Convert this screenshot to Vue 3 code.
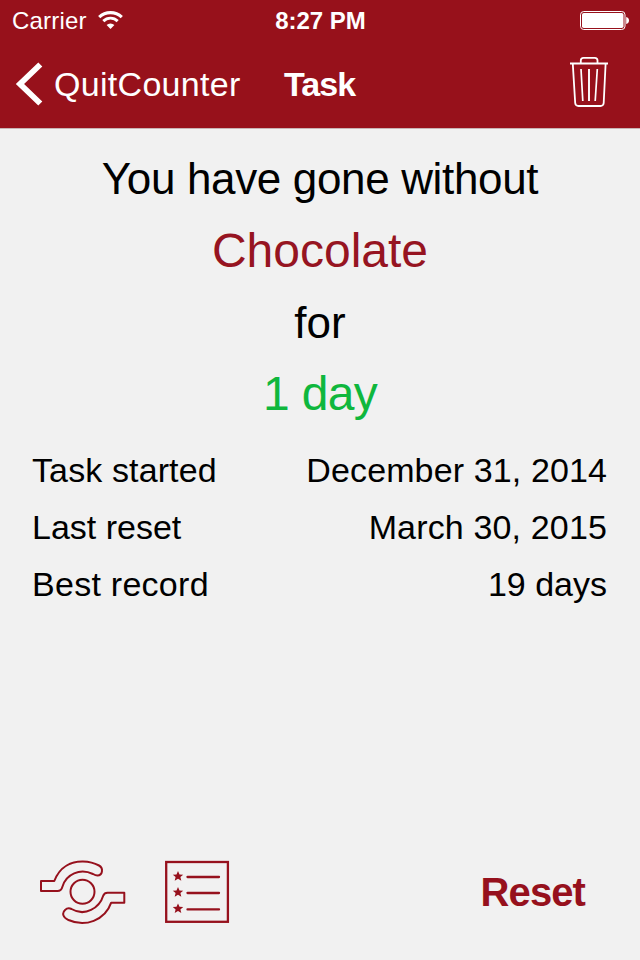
<script setup>
const lines = [
  { text: 'You have gone without', kind: 'plain lead' },
  { text: 'Chocolate', kind: 'subject' },
  { text: 'for', kind: 'plain' },
  { text: '1 day', kind: 'count' },
]

const stats = [
  { label: 'Task started', value: 'December 31, 2014', kind: 'started' },
  { label: 'Last reset', value: 'March 30, 2015', kind: 'last' },
  { label: 'Best record', value: '19 days', kind: 'best' },
]

const listRows = [876, 892, 908.4]
</script>

<template>
  <div class="screen">
    <header class="top">
      <div class="status">
        <div class="carrier">
          <span class="carrier-name">Carrier</span>
          <svg class="wifi" width="26" height="20" viewBox="97 10 26 20">
            <path d="M99.2 17.2A16.2 16.2 0 0 1 121.800 17.2" fill="none" stroke="#fff" stroke-width="3.1" />
            <path d="M103.300 21.1A10.300 10.300 0 0 1 117.700 21.1" fill="none" stroke="#fff" stroke-width="2.900" />
            <path d="M106.600 25A5.700 5.700 0 0 1 114.400 25L110.500 28.900Z" fill="#fff" />
          </svg>
        </div>
        <span class="clock">8:27 PM</span>
        <svg class="battery" width="50" height="20" viewBox="579 10 50 20">
          <rect x="580.500" y="11.500" width="44.500" height="18" rx="3.300" fill="none" stroke="#fff" stroke-width="1" />
          <rect x="582" y="13" width="41.500" height="15" rx="1.800" fill="#fff" />
          <path d="M626.200 17Q629 17.600 629 20.500T626.200 24Z" fill="#fff" />
        </svg>
      </div>
      <nav class="nav">
        <button class="back">
          <svg width="28" height="44" viewBox="15 62 28 44">
            <path d="M40.300 64.500L20 84L40.300 103.500" fill="none" stroke="#fff" stroke-width="5.800" />
          </svg>
          <span class="back-label">QuitCounter</span>
        </button>
        <h1 class="title">Task</h1>
        <button class="trash" aria-label="Delete">
          <svg width="40" height="56" viewBox="569 56 40 56" fill="none" stroke="#fff">
            <path d="M570 63.500H608" stroke-width="1.900" />
            <path d="M580.800 63V60.500Q580.800 57.800 583.500 57.800H594.800Q597.500 57.800 597.500 60.500V63" stroke-width="1.800" />
            <path d="M572.800 64L575.200 103Q575.500 106 578.500 106H600.500Q603.400 106 603.700 103L605.600 64" stroke-width="1.800" />
            <path d="M581 69L582.800 101M597.300 69L595.200 101" stroke-width="1.700" />
            <path d="M589 69V101" stroke-width="1.900" />
          </svg>
        </button>
      </nav>
    </header>

    <main class="content">
      <section class="summary">
        <p v-for="line in lines" :key="line.text" :class="line.kind"><span>{{ line.text }}</span></p>
      </section>
      <dl class="stats">
        <div v-for="row in stats" :key="row.label" class="stat" :class="row.kind">
          <dt>{{ row.label }}</dt>
          <dd>{{ row.value }}</dd>
        </div>
      </dl>
    </main>

    <footer class="toolbar">
      <button class="share" aria-label="Share">
        <svg width="88" height="66" viewBox="39 859 88 66" fill="none" stroke="#96111d" stroke-width="2" stroke-linejoin="round">
          <path d="M41 881H54.300C60 866 72 861.300 83 861.500Q92 861.700 99 865.500C103.800 868.200 102.500 875.500 97.500 875.500Q95.500 875.500 93 874C80 868 66 874 62.300 887Q61.300 891 57.500 891H41Z" />
          <path d="M124.300 892.700H107.500Q104.500 892.700 103.300 895.500C99.500 908 85 917 71.500 909C66.500 906.700 62 911.500 63.500 915.500C64.200 918 66.500 919 68.500 920C85 927.500 105 920.500 111.200 902.700H124.300Z" />
          <circle cx="82.500" cy="891.800" r="12" />
        </svg>
      </button>
      <button class="list" aria-label="Records">
        <svg width="66" height="64" viewBox="164 860 66 64">
          <rect x="166.200" y="862" width="61.700" height="59.800" fill="none" stroke="#96111d" stroke-width="2.300" />
          <g v-for="y in listRows" :key="y" :transform="`translate(178 ${y})`">
            <path d="M0-5L1.500-1.600L5.200-1.300L2.400 1L3.300 4.700L0 2.700L-3.300 4.700L-2.400 1L-5.200-1.300L-1.500-1.600Z" fill="#96111d" />
            <path d="M9.500 1H41" stroke="#96111d" stroke-width="2.300" stroke-linecap="round" />
          </g>
        </svg>
      </button>
      <button class="reset">Reset</button>
    </footer>
  </div>
</template>

<style>
body {
  margin: 0;
  background: #f1f1f1;
}
</style>

<style scoped>
.screen {
  display: flex;
  flex-direction: column;
  box-sizing: border-box;
  width: 640px;
  height: 960px;
  overflow: hidden;
  background: #f1f1f1;
  color: #000;
  font-family: "Liberation Sans", Arial, sans-serif;
  white-space: nowrap;
}
button {
  display: flex;
  padding: 0;
  border: 0;
  background: none;
  color: inherit;
  font: inherit;
}
svg {
  display: block;
  flex: none;
}
p, h1, dl, dt, dd {
  margin: 0;
}
.top {
  height: 128px;
  background: #97111b;
  border-bottom: 1px solid #c9b4b5;
  color: #fff;
}
.status {
  display: grid;
  grid-template-columns: 1fr auto 1fr;
  align-items: center;
  height: 40px;
  padding: 0 11px 0 12px;
}
.carrier {
  display: flex;
  align-items: center;
  gap: 10px;
}
.carrier-name {
  height: 40px;
  font-size: 24px;
  line-height: 42px;
  letter-spacing: 0.200px;
}
.clock {
  height: 40px;
  font-size: 24px;
  font-weight: bold;
  line-height: 42px;
}
.battery {
  justify-self: end;
}
.nav {
  display: grid;
  grid-template-columns: 269px auto 1fr;
  align-items: center;
  height: 88px;
  padding: 0 31px 0 15px;
}
.back {
  align-items: center;
  gap: 11px;
}
.back-label {
  font-size: 34px;
  line-height: 88px;
  letter-spacing: 0.300px;
}
.title {
  font-size: 34px;
  font-weight: bold;
  line-height: 88px;
  letter-spacing: -0.900px;
}
.trash {
  justify-self: end;
}
.content {
  flex: 1;
}
.summary {
  padding-top: 14px;
  text-align: center;
}
.summary p {
  height: 72px;
  line-height: 72px;
}
.plain {
  font-size: 44px;
}
.lead {
  letter-spacing: -0.350px;
}
.subject {
  color: #961421;
  font-size: 48px;
}
.summary .count {
  color: #0fb73d;
  font-size: 48px;
  line-height: 70px;
  letter-spacing: -0.700px;
}
.stats {
  padding: 11px 33px 0 32px;
  font-size: 34px;
  line-height: 57px;
}
.stat {
  display: flex;
  justify-content: space-between;
}
.started {
  letter-spacing: 0.120px;
}
.last dd {
  letter-spacing: 0.150px;
}
.best dt {
  letter-spacing: 0.270px;
}
.toolbar {
  display: flex;
  align-items: center;
  height: 136px;
  padding: 0 55px 0 39px;
}
.list {
  margin-left: 37px;
}
.reset {
  margin-left: auto;
  color: #96111d;
  font-size: 40px;
  font-weight: bold;
  letter-spacing: -0.900px;
}
</style>
